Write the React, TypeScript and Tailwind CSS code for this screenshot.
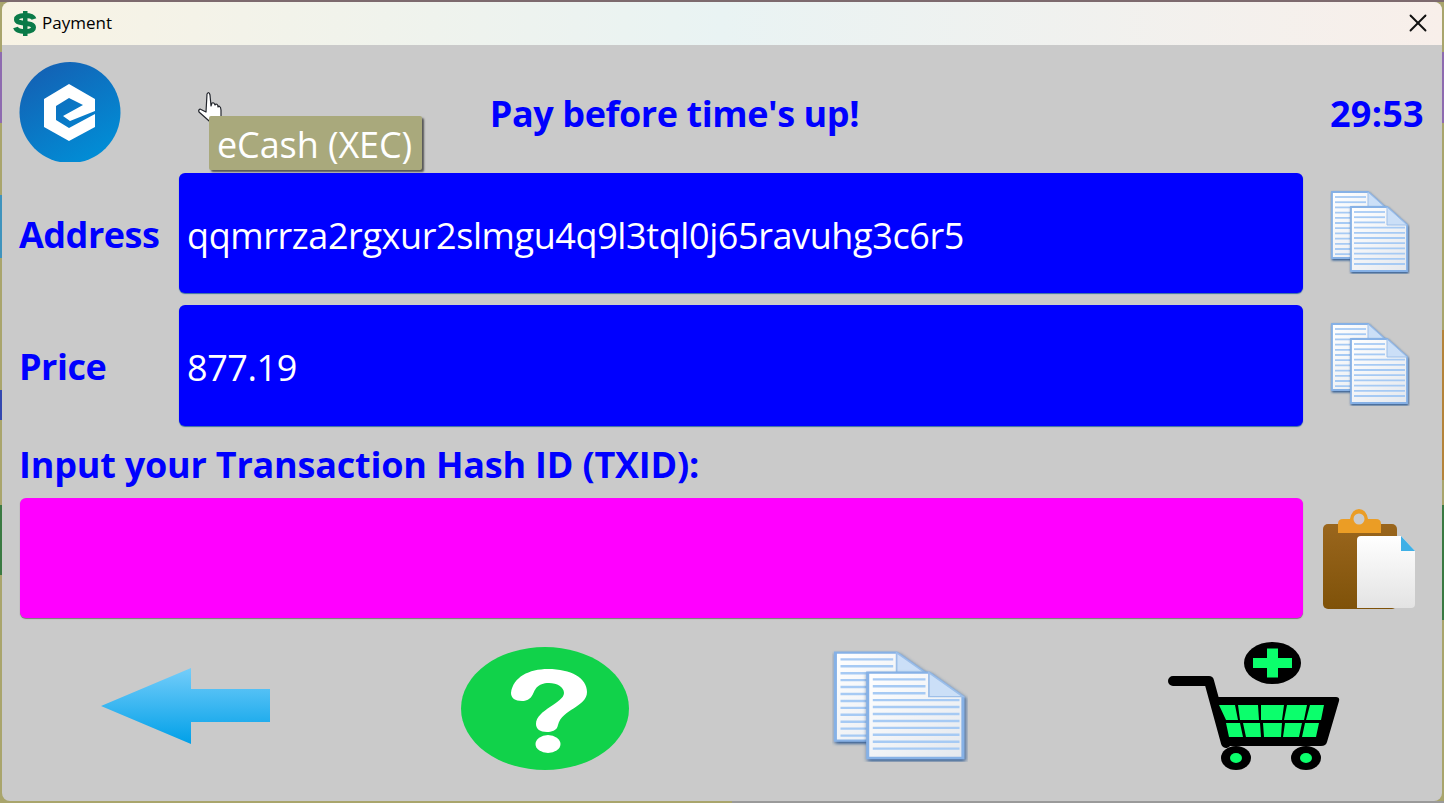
import { X } from "lucide-react";

const font = "font-['Open_Sans',sans-serif]";

const DocSheet = ({ x, y, w, h, id, fold }: { x: number; y: number; w: number; h: number; id: string; fold: number }) => {
  const lines: number[] = [];
  for (let ly = y + 5; ly < y + h - 3; ly += 5.2) lines.push(ly);
  return (
    <g>
      <path
        d={`M${x} ${y} H${x + w - fold} L${x + w} ${y + fold * 0.9} V${y + h} H${x} Z`}
        fill={`url(#${id})`}
        stroke="#86b1e6"
        strokeWidth="1.8"
      />
      {lines.map((ly) => (
        <line
          key={ly}
          x1={x + 3}
          x2={ly < y + fold ? x + w - fold - 2 : x + w - 2}
          y1={ly}
          y2={ly}
          stroke="#a6caf4"
          strokeWidth="1.8"
        />
      ))}
      <path d={`M${x + w - fold} ${y} L${x + w} ${y + fold * 0.9} H${x + w - fold} Z`} fill="#cbdff7" stroke="#9dbfe9" strokeWidth="1" />
    </g>
  );
};

// two overlapping pages, drawn on a 80x84 box
const CopyIcon = ({ className, id }: { className: string; id: string }) => (
  <svg viewBox="0 0 80 84" preserveAspectRatio="none" className={className}>
    <defs>
      <linearGradient id={id} x1="0" y1="0" x2="1" y2="1">
        <stop offset="0" stopColor="#ffffff" />
        <stop offset="1" stopColor="#e4e8ee" />
      </linearGradient>
      <filter id={`${id}-s`} x="-20%" y="-20%" width="140%" height="140%">
        <feDropShadow dx="0.7" dy="1.4" stdDeviation="1.1" floodColor="#27548f" floodOpacity="1" />
      </filter>
    </defs>
    <g filter={`url(#${id}-s)`}>
      <DocSheet x={2} y={2} w={54} h={66} id={id} fold={18} />
    </g>
    <g filter={`url(#${id}-s)`}>
      <DocSheet x={21} y={17} w={56} h={64} id={id} fold={20} />
    </g>
  </svg>
);

const PasteIcon = () => (
  <svg viewBox="0 0 93 101" className="w-[93px] h-[101px]">
    <defs>
      <linearGradient id="clipB" x1="0" y1="0" x2="0" y2="1">
        <stop offset="0" stopColor="#9a661d" />
        <stop offset="1" stopColor="#7f5209" />
      </linearGradient>
      <linearGradient id="clipP" x1="0" y1="0" x2="0" y2="1">
        <stop offset="0" stopColor="#ffffff" />
        <stop offset="1" stopColor="#e3e3e3" />
      </linearGradient>
    </defs>
    <rect x="0" y="15" width="74" height="85" rx="5" fill="url(#clipB)" />
    <path d="M15 24 V15 Q15 10 20 10 H27 Q29 0 36 0 Q43 0 45 10 H53 Q58 10 58 15 V24 Z" fill="#eb9d25" />
    <circle cx="36" cy="10" r="5.5" fill="#cbcbcb" />
    <path d="M34 31 Q34 27 38 27 H78 L92 42 V95 Q92 99 88 99 H34 Z" fill="url(#clipP)" />
    <path d="M78 27 L92 42 H78 Z" fill="#3fb0e6" />
  </svg>
);

const BackArrow = () => (
  <svg viewBox="0 0 169 76" className="w-[169px] h-[76px]">
    <defs>
      <linearGradient id="arrowG" x1="0" y1="0" x2="0" y2="1">
        <stop offset="0" stopColor="#74cdfa" />
        <stop offset="1" stopColor="#00a0e8" />
      </linearGradient>
    </defs>
    <path d="M0 38 L90 0 V21 H169 V54 H90 V76 Z" fill="url(#arrowG)" />
  </svg>
);

const HelpIcon = () => (
  <svg viewBox="0 0 168 123" className="w-[168px] h-[123px]">
    <ellipse cx="84" cy="61.5" rx="84" ry="61.5" fill="#11d24a" />
    <path
      d="M50 46 C52 30 68 22 87 22 C110 22 126 31 126 45 C126 60 101 62 97 78 C96 84 90 85 86 85 C79 85 75 82 75 77 C75 63 103 56 103 46 C103 40 96 36 88 36 C76 36 74 43 72 47 C69 53 65 54 61 54 C54 54 50 51 50 46 Z"
      fill="#fff"
    />
    <ellipse cx="87" cy="97" rx="12.5" ry="9" fill="#fff" />
  </svg>
);

const CartIcon = () => (
  <svg viewBox="0 0 172 128" className="w-[172px] h-[128px]">
    <ellipse cx="104.5" cy="21" rx="28.5" ry="21" fill="#000" />
    <path d="M99 6.5 H110 V16 H124 V26 H110 V35.5 H99 V26 H85 V16 H99 Z" fill="#0bff6c" />
    <path d="M5 39 H41 L58 101" fill="none" stroke="#000" strokeWidth="10" strokeLinecap="round" strokeLinejoin="round" />
    <path d="M49 55 H168 Q172 55 171 59 L159 100 Q158 104 153 104 H60 Q56 104 55 100 L45 59 Q44 55 49 55 Z" fill="#000" />
    <path d="M51 63 H67 L70 78 H58 Z M70 63 H90 L91 78 H72 Z M93 63 H116 L114 78 H93 Z M119 63 H139 L136 78 H116 Z M142 63 H156 L153 78 H138 Z" fill="#0bff6c" />
    <path d="M58 81 H72 L75 95 H61 Z M75 81 H92 L93 95 H78 Z M95 81 H114 L113 95 H96 Z M117 81 H134 L131 95 H115 Z M137 81 H151 L148 95 H134 Z" fill="#0bff6c" />
    <ellipse cx="68" cy="116" rx="15" ry="12" fill="#000" />
    <ellipse cx="138" cy="116" rx="15" ry="12" fill="#000" />
    <ellipse cx="68" cy="116" rx="6" ry="5" fill="#0bff6c" />
    <ellipse cx="138" cy="116" rx="6" ry="5" fill="#0bff6c" />
  </svg>
);

const ECashLogo = () => (
  <svg viewBox="0 0 102 100" className="w-[102px] h-[100px]">
    <defs>
      <linearGradient id="ecashG" x1="0.2" y1="0" x2="0.8" y2="1">
        <stop offset="0" stopColor="#1460b3" />
        <stop offset="1" stopColor="#0090d8" />
      </linearGradient>
    </defs>
    <circle cx="51" cy="50.5" r="50.5" fill="url(#ecashG)" />
    <path
      d="M50 22 L76 37 V49 L51 59 L44 54 L64 43 L50 36 L37 44 V58 L50 66 L76 52 V65 L50 79 L25 65 V37 Z"
      fill="#fff"
    />
  </svg>
);

const DollarIcon = () => (
  <svg viewBox="0 0 24 25" className="w-[24px] h-[25px] -mt-[1px]">
    <path d="M21 8 C20 5 16 4.5 12 4.5 C7 4.5 3.5 6 3.5 8.5 C3.5 14 20.5 10.5 20.5 16.5 C20.5 19 17 20.5 12 20.5 C7 20.5 3.5 19.5 2.5 16.5" fill="none" stroke="#0a7a48" strokeWidth="5" />
    <rect x="10" y="0" width="4.5" height="25" fill="#0a7a48" />
  </svg>
);

const HandCursor = () => (
  <svg viewBox="0 0 26 34" className="w-[26px] h-[34px]">
    <path
      d="M10 3 Q12 0 13 4 L14 15 L15 12 Q17 11 18 14 L19 13 Q21 13 21 16 L22 15 Q24 16 24 19 L24 28 Q23 32 19 32 Q14 32 11 29 L2 21 Q1 19 3 18 L9 21 Z"
      fill="#fff"
      stroke="#22252c"
      strokeWidth="1.2"
      strokeLinejoin="round"
    />
  </svg>
);

const Field = ({ className, children }: { className: string; children?: React.ReactNode }) => (
  <div className={`flex-1 rounded-[6px] flex items-center px-2 pt-[5px] text-[36px] tracking-[-0.4px] text-white ${className}`}>
    {children}
  </div>
);

export default function App() {
  return (
    <div className={`relative w-[1444px] h-[803px] overflow-hidden p-[2px] bg-[#a9a56c] ${font}`}>
      {/* bits of the desktop that show around the window */}
      <div className="absolute left-0 top-0 w-full h-[2px] bg-[#7d6a6e]" />
      <div className="absolute left-0 top-[52px] w-[2px] h-[71px] bg-[#8e6bb0]" />
      <div className="absolute left-0 top-[195px] w-[2px] h-[63px] bg-[#3e93bd]" />
      <div className="absolute left-0 top-[390px] w-[2px] h-[30px] bg-[#3448b0]" />
      <div className="absolute left-0 top-[505px] w-[2px] h-[70px] bg-[#3a7a42]" />
      <div className="absolute right-0 top-[52px] w-[2px] h-[71px] bg-[#8e6bb0]" />
      <div className="absolute right-0 top-[330px] w-[2px] h-[150px] bg-[#b5843a]" />
      <div className="absolute right-0 top-[505px] w-[2px] h-[115px] bg-[#3a7a42]" />
      <div className="absolute right-0 bottom-0 w-[712px] h-[2px] bg-[#9a9a9a]" />

      <div className="relative h-[799px] rounded-[8px] overflow-hidden bg-[#cacaca] flex flex-col">
        <div className="h-[43px] flex items-center pl-[11px] pr-[9px] bg-gradient-to-r from-[#f8f3e4] via-[#e9f3f3] to-[#f8efea]">
          <DollarIcon />
          <span className="ml-[5px] -mt-[2px] text-[17px] text-black">Payment</span>
          <X className="ml-auto -mt-[2px] w-[30px] h-[30px] text-[#111]" strokeWidth={1.5} absoluteStrokeWidth />
        </div>

        <div className="relative flex-1 flex flex-col pl-[17px]">
          <div className="flex items-start h-[128px] pt-[17px]">
            <ECashLogo />
            <div className="flex-1 pr-[102px] pt-[27px] text-center text-[#0000ff] font-bold text-[36px] leading-[50px] tracking-[-0.43px]">
              Pay before time's up!
            </div>
            <div className="pr-[18px] pt-[27px] text-[#0000ff] font-bold text-[36px] leading-[50px] tracking-[0.3px]">29:53</div>
          </div>

          <div className="absolute left-[195px] top-[46px]">
            <HandCursor />
          </div>
          <div className="absolute left-[207px] top-[71px] w-[213px] h-[54px] bg-[#a9a97c] rounded-[2px] shadow-[2px_2px_2px_#555] flex items-center pl-[8px] pt-[3px] text-[36px] tracking-[-0.1px] text-white">
            eCash (XEC)
          </div>

          <div className="flex h-[120px]">
            <div className="w-[160px] flex items-center pt-[3px] text-[#0000ff] font-bold text-[36px] tracking-[-0.5px]">Address</div>
            <Field className="bg-[#0000ff] shadow-[0_1px_1px_#3a6ea5]">qqmrrza2rgxur2slmgu4q9l3tql0j65ravuhg3c6r5</Field>
            <div className="w-[139px] flex items-center pl-[27px] -mt-[3px]">
              <CopyIcon id="docA" className="w-[80px] h-[84px]" />
            </div>
          </div>

          <div className="flex h-[121px] mt-[12px]">
            <div className="w-[160px] flex items-center pt-[3px] text-[#0000ff] font-bold text-[36px] tracking-[-0.5px]">Price</div>
            <Field className="bg-[#0000ff] shadow-[0_1px_1px_#3a6ea5]">877.19</Field>
            <div className="w-[139px] flex items-center pl-[27px] -mt-[3px]">
              <CopyIcon id="docB" className="w-[80px] h-[84px]" />
            </div>
          </div>

          <div className="h-[72px] flex items-center pt-[6px] text-[#0000ff] font-bold text-[36px] tracking-[-0.21px]">
            Input your Transaction Hash ID (TXID):
          </div>

          <div className="flex h-[120px]">
            <Field className="bg-[#ff00ff] ml-[1px] shadow-[0_1px_1px_#777]" />
            <div className="w-[139px] flex items-center pl-[20px] pt-[2px]">
              <PasteIcon />
            </div>
          </div>

          {/* bottom buttons */}
          <div className="flex-1 flex items-start pl-[82px] pt-[24px]">
            <div className="pt-[26px]">
              <BackArrow />
            </div>
            <div className="ml-[191px] pt-[5px]">
              <HelpIcon />
            </div>
            <div className="ml-[203px] pt-[8px]">
              <CopyIcon id="docC" className="w-[136px] h-[112px]" />
            </div>
            <div className="ml-[200px]">
              <CartIcon />
            </div>
          </div>
        </div>
      </div>
    </div>
  );
}
